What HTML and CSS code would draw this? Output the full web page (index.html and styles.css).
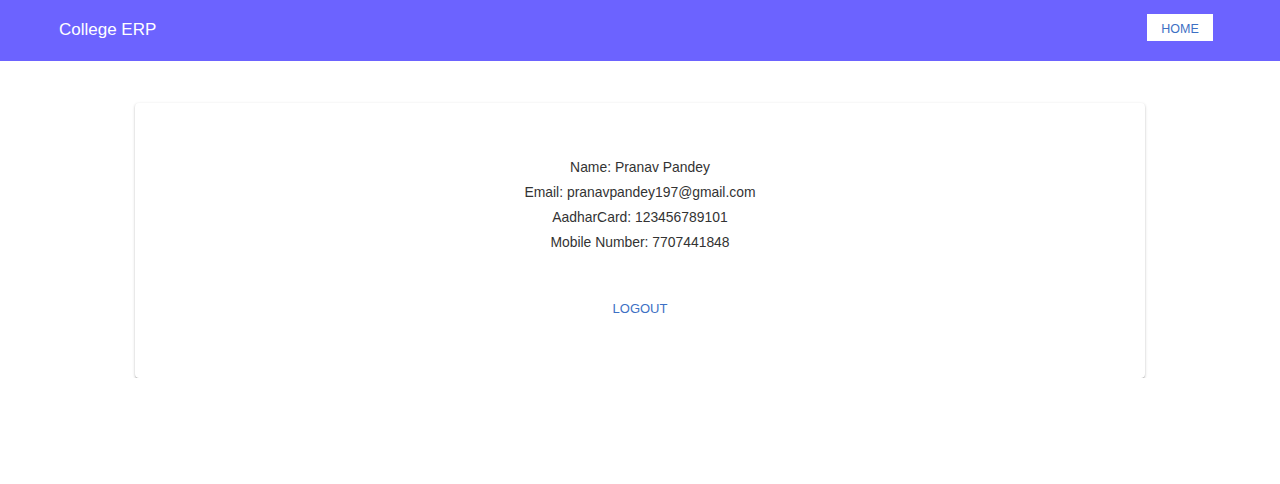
FILE: index.html
```html
<!DOCTYPE html>
<html>
<head>
<meta charset="utf-8">
<link rel="stylesheet" href="styles.css">
</head>
<body>
<header class="appbar">
  <div class="brand">College ERP</div>
  <button class="home-btn">HOME</button>
</header>
<main class="main">
  <section class="card">
    <div class="info">
      <p>Name: Pranav Pandey</p>
      <p>Email: pranavpandey197@gmail.com</p>
      <p>AadharCard: 123456789101</p>
      <p>Mobile Number: 7707441848</p>
    </div>
    <button class="logout">LOGOUT</button>
  </section>
</main>
</body>
</html>
```
FILE: styles.css
```css
* { box-sizing: border-box; }
body {
  margin: 0;
  font-family: "Liberation Sans", Arial, sans-serif;
  background: #fff;
}
.appbar {
  height: 61px;
  background: #6c63ff;
  display: flex;
  align-items: center;
  justify-content: space-between;
  padding: 0 67px 0 59px;
}
.brand {
  color: #fff;
  font-size: 17px;
  margin-top: -1px;
}
.home-btn {
  background: #fff;
  border: none;
  width: 66px;
  height: 27px;
  color: #3d70c4;
  font-family: inherit;
  font-size: 12.5px;
  padding: 2px 0 0;
  margin-top: -6px;
}
.main {
  display: flex;
  justify-content: center;
  padding-top: 42px;
}
.card {
  width: 1010px;
  height: 275px;
  background: #fff;
  border-radius: 4px;
  box-shadow: 0 1px 3px rgba(0,0,0,0.22), 0 1px 1px rgba(0,0,0,0.14), 0 2px 1px -1px rgba(0,0,0,0.12);
  display: flex;
  flex-direction: column;
  align-items: center;
  padding-top: 52px;
}
.info p {
  margin: 0;
  text-align: center;
  font-size: 13.9px;
  line-height: 25px;
  color: #333;
}
.logout {
  margin-top: 46px;
  background: none;
  border: none;
  color: #3d70c4;
  font-family: inherit;
  font-size: 13px;
  padding: 0;
}
```
